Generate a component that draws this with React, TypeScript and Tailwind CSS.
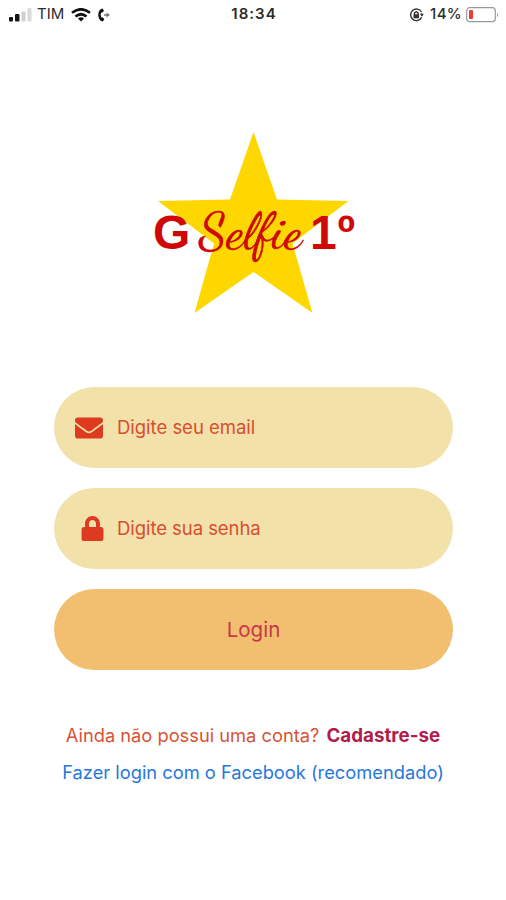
import React from "react";
import { FaEnvelope, FaLock } from "react-icons/fa";

function StatusBar() {
  return (
    <header className="grid h-[29px] grid-cols-3 items-center pr-[7px] pl-[9px] text-[15px] text-[#2c2c2c]">
      <div className="flex items-center">
        <svg width="24" height="14" viewBox="0 0 24 14">
          <rect x="0" y="9" width="4" height="4.500" rx="1" fill="#151515" />
          <rect x="6" y="6" width="4.500" height="7.500" rx="1" fill="#151515" />
          <rect x="12.500" y="3.500" width="4" height="10" rx="1" fill="#cfcfcf" />
          <rect x="18.500" y="0" width="4" height="13.500" rx="1" fill="#dadada" />
        </svg>
        <span className="ml-1 w-[34px]">TIM</span>
        <svg width="20" height="14" viewBox="0 0 20 14" fill="none" stroke="#111" strokeWidth="2.700">
          <path d="M1 4.800 Q10 -2.200 19 4.800" />
          <path d="M4.500 8.500 Q10 4 15.500 8.500" />
          <path d="M10 13.500 L6.900 10.500 Q10 8 13.100 10.500 Z" fill="#111" stroke="none" />
        </svg>
        <svg className="ml-[7px]" width="13" height="14" viewBox="0 0 13 14">
          <path d="M4.500 0.500 L2.500 1.200 C-0.500 4.200 -0.500 9.500 2.600 12.700 L5 13.500 L6.300 11 L4.400 9.200 L3.400 9.400 C2.500 7.800 2.500 6 3.300 4.400 L4.400 4.600 L6 2.800 Z" fill="#111" />
          <path d="M6 7 H9" stroke="#777" strokeWidth="1.500" />
          <path d="M8.500 4.500 L12 7 L8.500 9.500 Z" fill="#777" />
        </svg>
      </div>
      <time className="text-center font-semibold tracking-[1px]">18:34</time>
      <div className="flex items-center justify-end">
        <svg width="15" height="14" viewBox="0 0 15 14" fill="none" stroke="#333" strokeWidth="1.400">
          <path d="M12.500 4 A5.800 5.800 0 1 0 12.700 9.200" />
          <path d="M12.800 5.500 V8" />
          <path d="M10.800 5.800 H14.800 L12.800 8.500 Z" fill="#333" stroke="none" />
          <rect x="4.500" y="6.300" width="5.500" height="4" fill="#333" stroke="none" />
          <path d="M5.500 7 V5 Q7.200 2.500 9 5 V7" />
        </svg>
        <span className="ml-1.5 font-medium tracking-[0.3px]">14%</span>
        <svg className="ml-1" width="33" height="16" viewBox="0 0 33 16">
          <rect x="0.700" y="0.700" width="28.600" height="14" rx="3" fill="#fff" stroke="#999" strokeWidth="1.200" />
          <rect x="3" y="3" width="4" height="9" rx="1" fill="#ee3b35" />
          <path d="M31 5.500 Q33 8 31 10.500 Z" fill="#999" />
        </svg>
      </div>
    </header>
  );
}

function Logo() {
  return (
    <svg className="mt-[101px] ml-[152px]" width="206" height="186" viewBox="152 130 206 186" fill="#cf0808">
      <path d="M253.500 132 L277 199.500 L348.500 201 L292.500 243.500 L312.500 313 L253.500 272 L194.500 313 L214 243.500 L158 201 L230 199.500 Z" fill="#ffd700" />
      <text x="153" y="248.500" fontFamily="'Liberation Sans', sans-serif" fontWeight="700" fontSize="48">G</text>
      <text x="199" y="247.500" fontFamily="'Dancing Script', 'Liberation Serif', cursive" fontSize="50" textLength="103" lengthAdjust="spacingAndGlyphs" stroke="#cf0808" strokeWidth="0.500">Selfie</text>
      <text x="310" y="248.500" fontFamily="'Liberation Sans', sans-serif" fontWeight="700" fontSize="48" textLength="45">1º</text>
    </svg>
  );
}

export default function App() {
  return (
    <main className="h-[900px] w-[506px] overflow-hidden bg-white" style={{ fontFamily: "Inter, sans-serif" }}>
      <StatusBar />
      <Logo />
      <form className="mt-[71px] ml-[54px] flex w-[399px] flex-col gap-5 text-[18.5px] text-[#d94d32]">
        <label className="flex h-[81px] items-center rounded-full bg-[#f2e1a9] pl-[21px]">
          <FaEnvelope size={28} color="#dd3a20" />
          <span className="ml-3.5 pt-px tracking-[-0.02px]">Digite seu email</span>
        </label>
        <label className="flex h-[81px] items-center rounded-full bg-[#f2e1a9] pl-[26px]">
          <FaLock size={25} color="#dd3a20" />
          <span className="ml-3 pt-px tracking-[-0.06px]">Digite sua senha</span>
        </label>
        <button type="button" className="h-[81px] rounded-full bg-[#f2bf70] pt-0.5 text-[20.5px] text-[#c8364a]">Login</button>
      </form>
      <footer className="mt-[47px] flex flex-col items-center text-[18.3px] leading-[37px] whitespace-nowrap">
        <p className="h-[37px] text-[#d75337]">
          <span>Ainda não possui uma conta?</span>
          <b className="ml-[7px] text-[18.8px] font-bold text-[#b01c4b]">Cadastre-se</b>
        </p>
        <a className="text-[#2678dc]">Fazer login com o Facebook (recomendado)</a>
      </footer>
    </main>
  );
}
